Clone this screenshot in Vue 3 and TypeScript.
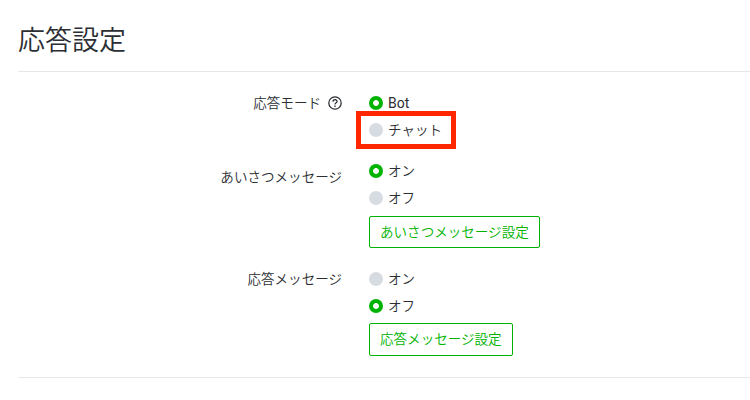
<script setup lang="ts">
interface Option { label: string; checked: boolean; marked?: boolean; latin?: boolean }
interface Row { id: string; label: string; help?: boolean; options: Option[]; button?: string }
const rows: Row[] = [
  { id: 'mode', label: '応答モード', help: true, options: [{ label: 'Bot', checked: true, latin: true }, { label: 'チャット', checked: false, marked: true }] },
  { id: 'greeting', label: 'あいさつメッセージ', options: [{ label: 'オン', checked: true }, { label: 'オフ', checked: false }], button: 'あいさつメッセージ設定' },
  { id: 'reply', label: '応答メッセージ', options: [{ label: 'オン', checked: false }, { label: 'オフ', checked: true }], button: '応答メッセージ設定' },
]
</script>

<template>
  <main class="page">
    <h1 class="title">応答設定</h1>
    <section class="settings">
      <div v-for="row in rows" :key="row.id" class="row" :class="row.id">
        <div class="label">
          <span>{{ row.label }}</span>
          <svg v-if="row.help" class="help" viewBox="0 0 14 14" fill="none" stroke="#2b2e33" stroke-width="1.25">
            <circle cx="7" cy="7" r="6.2" />
            <path d="M5 5.8C5 3.1 9.1 3.1 9.1 5.5C9.1 6.9 7 6.8 7 8.5M7 9.6V10.9" />
          </svg>
        </div>
        <div class="choices">
          <div v-for="option in row.options" :key="option.label" class="option">
            <span class="radio" :class="{ checked: option.checked }"></span>
            <span :class="{ latin: option.latin }">{{ option.label }}</span>
            <span v-if="option.marked" class="marker"></span>
          </div>
          <button v-if="row.button" class="button">{{ row.button }}</button>
        </div>
      </div>
    </section>
  </main>
</template>

<style>
body { background: #fff; }
</style>
<style scoped>
.page { box-sizing: border-box; height: 400px; padding-left: 18px; overflow: hidden; color: #2b2e33; font: 350 13.55px/20px Roboto, "Noto Sans CJK JP", sans-serif; }
.title { box-sizing: border-box; height: 71px; margin: 0; padding-top: 21px; font-size: 27px; line-height: 40px; font-weight: 350; }
.settings { box-sizing: border-box; height: 307px; border-top: 1px solid #e6e7e9; border-bottom: 1px solid #e6e7e9; padding-top: 17px; }
.row { display: flex; gap: 27px; }
.label { box-sizing: border-box; width: 324px; display: flex; justify-content: flex-end; align-items: center; height: 28px; gap: 7px; }
.help { width: 14px; height: 14px; }
.mode { height: 68px; }
.greeting { height: 108px; }
.greeting .label { margin-top: 6px; }
.option { position: relative; display: flex; align-items: center; gap: 5px; height: 27.5px; }
.latin { font-size: 14px; font-weight: 400; }
.radio { box-sizing: border-box; width: 14px; height: 14px; border-radius: 50%; background: #d7dce2; }
.radio.checked { background: radial-gradient(circle, #fff 2.5px, #00b300 3.3px); }
.marker { position: absolute; left: -13px; top: -5.5px; width: 90px; height: 28px; border: 5px solid #ff2600; }
.button { box-sizing: border-box; display: block; height: 32px; margin: 4px 0 0; padding: 0 10px 1px; border: 1px solid #00b300; border-radius: 2px; background: #fff; color: #00b300; font: inherit; }
.reply .button { height: 33px; margin-top: 3px; padding-bottom: 2px; }
</style>
